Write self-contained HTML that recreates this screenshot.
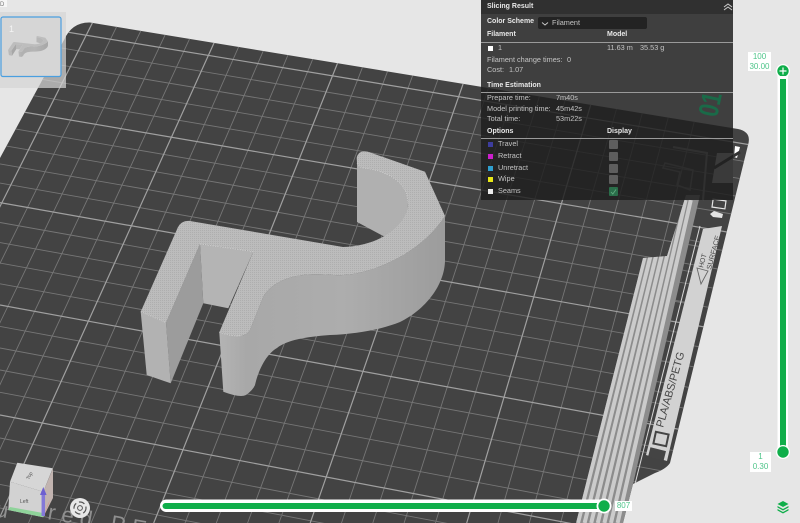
<!DOCTYPE html>
<html><head><meta charset="utf-8">
<style>
html,body{margin:0;padding:0;width:800px;height:523px;overflow:hidden;background:#e6e6e6}
body{position:relative;font-family:"Liberation Sans",sans-serif}
svg{position:absolute;left:0;top:0}
#p{position:absolute;left:481px;top:0;width:252px;height:200px;background:rgba(31,31,31,.84)}
#h{position:absolute;left:0;top:0;width:252px;height:14px;background:#303030}
.t{position:absolute;line-height:10px;height:10px;font-size:7.3px;color:#c4c4c4;white-space:nowrap}
.b{font-weight:bold;font-size:7px;color:#e8e8e8}
.l{position:absolute;left:0;width:252px;height:1px;background:#9a9a9a}
.s{position:absolute;left:7px;width:5px;height:5px}
.c{position:absolute;left:128px;width:9px;height:9px;background:#5e5e5e;border-radius:1px}
.n{position:absolute;background:#fff;color:#4fc58a;font-size:8px;line-height:10px;text-align:center}
</style></head><body>
<svg width="800" height="523" viewBox="0 0 800 523">
<defs>
<clipPath id="bed"><path d="M0,158 L64,40 Q72,22 90,22.5 L738,129 Q752,132 748,145 L670,463 Q666,469 655,473 L633,484 L623,523 L0,523Z"/></clipPath>
<clipPath id="st"><path d="M686,195 L700,195 L624,523 L576,523 L643,258 L667,256Z"/></clipPath>
<pattern id="h1" width="2" height="2" patternUnits="userSpaceOnUse"><rect width="2" height="2" fill="#bcbcbc"/><rect width="1" height="1" fill="#aeaeae"/></pattern>
<linearGradient id="g1" x1="0" x2="1" y1="0" y2="0"><stop offset="0" stop-color="#b4b4b4"/><stop offset=".12" stop-color="#a8a8a8"/><stop offset=".55" stop-color="#adadad"/><stop offset="1" stop-color="#9c9c9c"/></linearGradient>
<g id="obj">
<path d="M357,163 L357,222 L387,238 C400,230 408,215 408,203 C408,182 385,170 363,168 Q358,167 357,163Z" fill="#b0b0b0"/>
<path d="M200,244 L253.3,251.7 L228.3,308.3 L203.3,303.3Z" fill="#b4b4b4"/>
<path d="M166,322.7 L200,244 L203.3,303.3 L170.7,383.3Z" fill="#9c9c9c"/>
<path d="M140.7,311.7 L166,322.7 L170.7,383.3 L146.7,375Z" fill="#b2b2b2"/>
<path d="M219.3,332.3 L223.3,391.7 Q240,398 246,395 Q253,390 255,385 C258,372 265,355 277,348 C287,340 305,337 330,335 C355,334 380,330 400,322 C425,310 445,285 445,260 L445,216 C420,255 370,274 343,275 C335,276 320,273 303,275 C285,277 270,285 263.3,296.7 L250,330 Q247,335 241.7,335.7 Q232,337 219.3,332.3Z" fill="url(#g1)"/>
<path d="M140.7,311.7 L166,322.7 L200,244 L253.3,251.7 L219.3,332.3 Q232,337 241.7,335.7 Q247,335 250,330 L263.3,296.7 C270,285 285,277 303,275 C320,273 335,276 343,275 C370,274 420,255 445,216 L425,171.7 L368,151.7 Q358,150 356.7,158 L357,163 Q358,167 363,168 C385,170 408,182 408,203 C408,225 380,246 343,247 L190,221 Q182,220 178,227Z" fill="url(#h1)"/>
</g>
</defs>
<path d="M0,158 L64,40 Q72,22 90,22.5 L738,129 Q752,132 748,145 L670,463 Q666,469 655,473 L633,484 L623,523 L0,523Z" fill="#434343"/>
<g clip-path="url(#bed)">
<path fill="none" stroke="#767676" stroke-width=".9" d="M129.8,0L-128,523M155.7,0L-96.7,523M181.6,0L-65.4,523M207.5,0L-34.1,523M259.3,0L28.5,523M285.2,0L59.8,523M311.1,0L91.1,523M337,0L122.4,523M388.7,0L185,523M414.6,0L216.3,523M440.5,0L247.6,523M466.4,0L278.9,523M518.2,0L341.5,523M544.1,0L372.8,523M570,0L404.1,523M595.9,0L435.4,523M647.7,0L498,523M673.5,0L529.3,523M699.4,0L560.6,523M725.3,0L591.9,523
M0,37.8L800,170.7M0,54.9L800,188.6M0,72.3L800,206.9M0,90L800,225.5M0,126.3L800,263.7M0,144.9L800,283.2M0,163.9L800,303.2M0,183.1L800,323.3M0,222.5L800,364.7M0,242.6L800,385.9M0,263.1L800,407.4M0,283.8L800,429.2M0,326.4L800,473.9M0,348L800,496.6M0,370L800,519.8M0,392.3L800,543.2M0,438L800,590.8M0,461L800,615M0,484.4L800,640M0,508L800,665"/>
<path fill="none" stroke="#a0a0a0" stroke-width="1.2" d="M103.9,0L-159.3,523M233.4,0L-2.8,523M362.8,0L153.7,523M492.3,0L310.2,523M621.8,0L466.7,523M0,21L800,153M0,108L800,244.4M0,202.6L800,343.9M0,305L800,451.4M0,415L800,567M0,533L800,691"/>
<path fill="none" stroke="#6e6e6e" stroke-width="1" d="M690,240L705,243M682,270L697,273M674,300L689,303M666,330L681,333M658,360L673,363M650,390L665,393M642,420L657,423M634,450L649,453M626,480L641,483"/>
<g clip-path="url(#st)">
<rect x="560" y="190" width="150" height="340" fill="#8c8c8c"/>
<path fill="none" stroke="#cbcbcb" stroke-width="4" d="M659,200L578,523M664.3,200L584.6,523M669.6,200L591.2,523M674.9,200L597.8,523M680.2,200L604.4,523M685.5,200L611,523M690.8,200L617.6,523"/>
</g>
<path d="M703,229 L722,226 L667,461 L646,455Z" fill="#d2d2d2"/>
<path d="M700,226 L635,484" stroke="#d8d8d8" stroke-width="1" fill="none"/>
<path d="M717,153 L733,153 L733,183 L712,183Z" fill="#c4c4c4"/>
<path d="M735,146 L740,147 L737,158 L734,157Z" fill="#fff"/>
<path d="M714,168 L740,152" stroke="#333" stroke-width="3" fill="none"/>
<rect x="712.5" y="200" width="13" height="8" fill="none" stroke="#e4e4e4" stroke-width="1.2" transform="rotate(8 719 204)"/>
<path d="M710,214 L714,211 L723,214 L722,218 L713,217Z" fill="#e4e4e4"/>
<path d="M673,147 L707,153 L703,200" fill="none" stroke="#8a8a8a" stroke-width="2"/>
<path d="M665,163 L693,170 L690,190 L677,185 L680,172 L663,168Z" fill="none" stroke="#777" stroke-width="1.5"/>
<text transform="translate(663,428) rotate(-74)" font-family="Liberation Sans" font-size="11" fill="#474747" textLength="78" lengthAdjust="spacing">PLA/ABS/PETG</text>
<text transform="translate(703,268) rotate(-75)" font-family="Liberation Sans" font-size="7" fill="#474747" textLength="14" lengthAdjust="spacingAndGlyphs">HOT</text>
<text transform="translate(711,270) rotate(-75)" font-family="Liberation Sans" font-size="7" fill="#474747" textLength="35" lengthAdjust="spacingAndGlyphs">SURFACE</text>
<path d="M697,268 L708,271 L701,284Z" fill="none" stroke="#666" stroke-width=".9"/>
<rect x="654.5" y="433" width="13" height="12" fill="#d2d2d2" stroke="#444" stroke-width="2" transform="rotate(12 661 439)"/>
<rect x="649" y="449" width="16" height="10" fill="#444" transform="rotate(14 657 454)"/>
<text x="-5" y="516" transform="rotate(10 -5 516)" font-family="Liberation Sans" font-size="22" fill="#8f8f8f">u</text>
<text transform="translate(47,519) rotate(10)" font-family="Liberation Sans" font-size="22" fill="#8f8f8f" textLength="112" lengthAdjust="spacing">red PEI</text>
</g>
<use href="#obj"/>
<g fill="none" stroke="#dedede" stroke-width=".5" stroke-dasharray="1.5 1"><path d="M140.7,311.7 L166,322.7M200,244 L253.3,251.7M219.3,332.3 Q232,337 241.7,335.7M357,163 Q358,167 363,168 C385,170 408,182 408,203"/></g>
<rect x="0" y="12" width="66" height="76" fill="#d6d6d6" fill-opacity=".72"/>
<rect x="1" y="17" width="60" height="59.5" rx="2" fill="#d6d6d6" stroke="#4a9fe0" stroke-width="1.2"/>
<g opacity=".8"><use href="#obj" transform="translate(-10.3,23.2) scale(.131,.085)"/></g>
<text x="9" y="32" font-family="Liberation Sans" font-size="9" fill="#f4f4f4">1</text>
<rect x="0" y="0" width="7" height="7" fill="#f6f6f6"/>
<text x="0" y="6" font-family="Liberation Sans" font-size="6" fill="#777">D</text>
<path d="M43.3,517 L53,498 L53,468.3 L43.3,491.7Z" fill="#c2b4b0"/>
<path d="M17.3,462.7 L52.7,468.3 L43.3,491.7 L10,481.7Z" fill="#d6d6d6"/>
<path d="M10,481.7 L43.3,491.7 L43.3,517.3 L8.3,510Z" fill="#d2d2d2"/>
<path d="M8.3,510 L43.3,517.3 L43,513 L10,507Z" fill="#8fd39a"/>
<path d="M43.5,517 L50,500 L54,492 L48,504Z" fill="#e07d78"/>
<path d="M43.3,516 L43.3,494" stroke="#8478d8" stroke-width="3.5"/>
<path d="M40,495 L43.3,487 L46.6,495Z" fill="#6d5fd0"/>
<text x="20" y="503" font-family="Liberation Sans" font-size="5" fill="#555">Left</text>
<text transform="translate(29,480) rotate(-62)" font-family="Liberation Sans" font-size="5" fill="#555">Top</text>
<circle cx="80" cy="508" r="10" fill="#e8e8e8"/>
<circle cx="80" cy="508" r="6" fill="none" stroke="#555" stroke-width="1.2" stroke-dasharray="6 3"/>
<circle cx="80" cy="508" r="2.4" fill="none" stroke="#555" stroke-width="1"/>
<rect x="160" y="499.5" width="450" height="12.5" rx="6.2" fill="#fff"/>
<rect x="162.5" y="503" width="442" height="6" rx="3" fill="#0fae4a"/>
<circle cx="604" cy="506" r="7.5" fill="#fff"/>
<circle cx="604" cy="506" r="5.7" fill="#0fae4a"/>
<rect x="777.5" y="66" width="10.5" height="392" rx="5" fill="#fff"/>
<rect x="780" y="71" width="6" height="381" fill="#0fae4a"/>
<circle cx="783" cy="71" r="7" fill="#fff"/>
<circle cx="783" cy="71" r="5.7" fill="#0fae4a"/>
<path d="M779.5,71H786.5M783,67.5V74.5" stroke="#fff" stroke-width="1.2"/>
<rect x="780" y="76" width="6" height="3" fill="#fff"/>
<circle cx="783" cy="452" r="7" fill="#fff"/>
<circle cx="783" cy="452" r="5.7" fill="#0fae4a"/>
<g fill="#0fae4a"><path d="M783,501 L788.5,504 L783,507 L777.5,504Z"/><path d="M777.5,506 L783,509 L788.5,506 L788.5,507.5 L783,510.5 L777.5,507.5Z"/><path d="M777.5,509 L783,512 L788.5,509 L788.5,510.5 L783,513.5 L777.5,510.5Z"/></g>
</svg>
<div class="n" style="left:615px;top:501px;width:17px;height:10px">807</div>
<div class="n" style="left:748px;top:52px;width:23px;height:19px">100<br>30.00</div>
<div class="n" style="left:750px;top:452px;width:21px;height:20px;padding-top:0">1<br>0.30</div>
<div id="p">
<div id="h"></div>
<div class="t b" style="left:6px;top:2px">Slicing Result</div>
<svg width="10" height="8" style="left:242px;top:3px"><path d="M1,4 L5,1 L9,4M1,7 L5,4 L9,7" fill="none" stroke="#ccc" stroke-width="1"/></svg>
<div class="t b" style="left:6px;top:17px">Color Scheme</div>
<div style="position:absolute;left:57px;top:17px;width:109px;height:12px;background:#232323;border-radius:2px"></div>
<svg width="8" height="6" style="left:60px;top:21px"><path d="M1,1.5 L4,4 L7,1.5" fill="none" stroke="#ccc" stroke-width=".9"/></svg>
<div class="t" style="left:71px;top:18px">Filament</div>
<div class="t b" style="left:6px;top:30px">Filament</div>
<div class="t b" style="left:126px;top:30px">Model</div>
<div class="l" style="top:42px"></div>
<div class="s" style="top:45.5px;background:#fff"></div>
<div class="t" style="left:17px;top:43px">1</div>
<div class="t" style="left:126px;top:43px">11.63 m</div>
<div class="t" style="left:159px;top:43px">35.53 g</div>
<div class="t" style="left:6px;top:55px">Filament change times:</div>
<div class="t" style="left:86px;top:55px">0</div>
<div class="t" style="left:6px;top:65px">Cost:</div>
<div class="t" style="left:28px;top:65px">1.07</div>
<div class="t b" style="left:6px;top:81px">Time Estimation</div>
<div class="l" style="top:92px"></div>
<div class="t" style="left:6px;top:93px">Prepare time:</div>
<div class="t" style="left:75px;top:93px">7m40s</div>
<div class="t" style="left:6px;top:104px">Model printing time:</div>
<div class="t" style="left:75px;top:104px">45m42s</div>
<div class="t" style="left:6px;top:114px">Total time:</div>
<div class="t" style="left:75px;top:114px">53m22s</div>
<div class="t b" style="left:6px;top:127px">Options</div>
<div class="t b" style="left:126px;top:127px">Display</div>
<div class="l" style="top:138px"></div>
<div class="s" style="top:142px;background:#3d3d9e"></div><div class="t" style="left:17px;top:139px">Travel</div><div class="c" style="top:140px"></div>
<div class="s" style="top:153.5px;background:#cc1fcc"></div><div class="t" style="left:17px;top:151px">Retract</div><div class="c" style="top:152px"></div>
<div class="s" style="top:165.5px;background:#2f9fcf"></div><div class="t" style="left:17px;top:163px">Unretract</div><div class="c" style="top:164px"></div>
<div class="s" style="top:177px;background:#e8e816"></div><div class="t" style="left:17px;top:174px">Wipe</div><div class="c" style="top:175px"></div>
<div class="s" style="top:188.5px;background:#ececec"></div><div class="t" style="left:17px;top:186px">Seams</div><div class="c" style="top:186.5px;background:#2a6e4a"></div>
<svg width="9" height="9" style="left:128px;top:186.5px"><path d="M2,5 L3.8,7 L7,2.5" fill="none" stroke="#5fa97e" stroke-width=".9"/></svg>
</div>
<svg width="800" height="523" viewBox="0 0 800 523" style="pointer-events:none"><text transform="translate(717,118) rotate(-78)" font-family="Liberation Sans" font-weight="bold" font-size="28" fill="#1a6a48" textLength="24" lengthAdjust="spacingAndGlyphs">01</text></svg>
</body></html>
